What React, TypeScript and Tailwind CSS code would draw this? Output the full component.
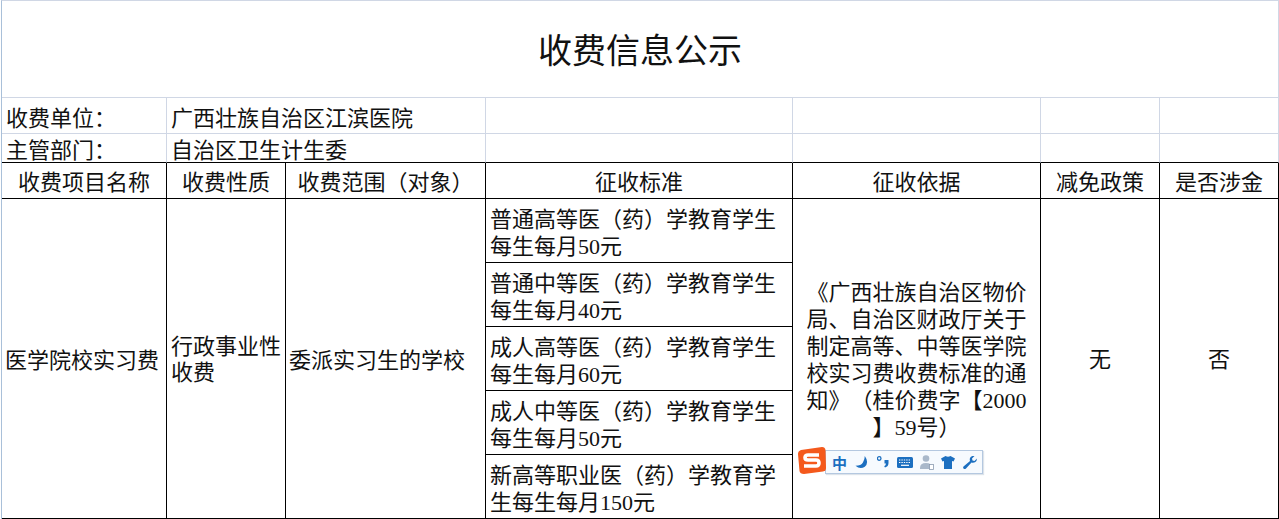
// App.tsx
const FONT = 'font-["Liberation_Serif","Noto_Sans_CJK_SC",serif]';

const HEADERS = ['收费项目名称', '收费性质', '收费范围（对象）', '征收标准', '征收依据', '减免政策', '是否涉金'];

const STANDARDS = [
  ['普通高等医（药）学教育学生', '每生每月50元'],
  ['普通中等医（药）学教育学生', '每生每月40元'],
  ['成人高等医（药）学教育学生', '每生每月60元'],
  ['成人中等医（药）学教育学生', '每生每月50元'],
  ['新高等职业医（药）学教育学', '生每生每月150元'],
];

const BASIS = ['《广西壮族自治区物价', '局、自治区财政厅关于', '制定高等、中等医学院', '校实习费收费标准的通', '知》（桂价费字【2000', '】59号）'];

function ImeBar() {
  return (
    <div className="absolute left-[798px] top-[447px] flex items-start">
      {/* logo */}
      <svg width="28" height="27" viewBox="0 0 28 27" className="relative z-10 shrink-0">
        <path d="M3 3 L24 0 Q27 0 27.500 3 L28 21 Q28 24 25 24.500 L6 27 Q2 27 1.500 24 L0 7 Q0 4 3 3 Z" fill="#f4591c" />
        <path d="M21 8 H10 Q7 8 7 10.500 Q7 13 10 13 H18 Q21 13 21 16 Q21 19 18 19 H6" fill="none" stroke="#fff" strokeWidth="3.600" />
      </svg>
      <div className="mt-[3px] -ml-[1px] flex h-[24px] w-[158px] items-center border border-[#b4c8e0] bg-[#f6fafe] shadow-[1px_1px_1px_#dde3ea]">
        <span className='ml-[6px] w-[15px] font-["Noto_Sans_CJK_SC",sans-serif] text-[15px] leading-none font-bold text-[#1c6fc0]'>中</span>
        <svg width="14" height="13" viewBox="0 0 14 14" className="ml-[8px]">
          <path d="M10 0 Q15 7 10 11.500 Q5 15 0 10.500 Q6 10.500 8 7 Q10 4 10 0 Z" fill="#1c6fc0" />
        </svg>
        <svg width="12" height="12" viewBox="0 0 12 12" className="ml-[8px]">
          <circle cx="2.200" cy="2.500" r="1.800" fill="none" stroke="#1c6fc0" strokeWidth="1.300" />
          <path d="M7.500 4 H11.500 V7 Q11.500 10.500 8 11.500 L7.200 10.300 Q8.800 9.500 9 7.500 H7.500 Z" fill="#1c6fc0" />
        </svg>
        <svg width="16" height="11" viewBox="0 0 16 11" className="ml-[8px]">
          <rect width="16" height="11" rx="1.500" fill="#1c6fc0" />
          <path d="M2 3 H14 M2 5.500 H14" stroke="#fff" strokeWidth="1.200" strokeDasharray="1.400 1" />
          <path d="M4 8.300 H12" stroke="#fff" strokeWidth="1.200" />
        </svg>
        <svg width="14" height="15" viewBox="0 0 14 15" className="ml-[7px]">
          <circle cx="6" cy="3.500" r="3.300" fill="#a9b8ca" />
          <path d="M0 13 Q0 8 6 8 Q12 8 12 13 V14 H0 Z" fill="#a9b8ca" />
          <rect x="9.500" y="9.500" width="4" height="5" fill="#fff" stroke="#8a9bb0" strokeWidth="0.800" />
        </svg>
        <svg width="14" height="13" viewBox="0 0 14 13" className="ml-[7px]">
          <path d="M4.500 0 Q7 1.500 9.500 0 L14 2.500 L12.500 5.500 L11 5 V13 H3 V5 L1.500 5.500 L0 2.500 Z" fill="#1c6fc0" />
        </svg>
        <svg width="14" height="13" viewBox="0 0 14 13" className="ml-[8px]">
          <path d="M14 2.500 L11.500 5 L9.500 4.500 L9 2.500 L11.500 0 Q8 -0.500 7 2 Q6.500 3.500 7 5 L0.500 10.500 Q-0.500 12 1 13 Q2 13.500 3 12.500 L8.500 6.500 Q10.500 7 12 6.200 Q14 5 14 2.500 Z" fill="#1c6fc0" />
        </svg>
      </div>
    </div>
  );
}

export default function App() {
  const blackCell = 'border-r border-b border-black';
  const lightCell = 'border-r border-b border-[#d0d7e5]';

  return (
    <div className={`relative h-[519px] w-[1279px] overflow-hidden bg-white pl-[1px] text-[22px] leading-[27px] text-[#111] [text-spacing-trim:space-all] ${FONT}`}>
      <div className="grid grid-cols-[165px_119px_200px_307px_248px_119px_119px] grid-rows-[97px_36px_29px_36px_repeat(5,64px)] border-t border-l border-t-[#d0d7e5] border-l-[#a9c0d9]">
        {/* 标题 */}
        <div className={`col-span-7 flex items-center justify-center pt-[4px] text-[34px] ${lightCell}`}>收费信息公示</div>

        {/* 单位信息 */}
        <div className={`flex items-center pt-[6px] pl-[4px] ${lightCell}`}>收费单位：</div>
        <div className={`col-span-2 flex items-center pt-[6px] pl-[4px] ${lightCell}`}>广西壮族自治区江滨医院</div>
        <div className={lightCell} />
        <div className={lightCell} />
        <div className={lightCell} />
        <div className={lightCell} />

        <div className={`flex items-center border-b-black pt-[4px] pl-[4px] ${lightCell}`}>主管部门：</div>
        <div className={`col-span-2 flex items-center border-b-black pt-[4px] pl-[4px] ${lightCell}`}>自治区卫生计生委</div>
        <div className={`border-b-black ${lightCell}`} />
        <div className={`border-b-black ${lightCell}`} />
        <div className={`border-b-black ${lightCell}`} />
        <div className={`border-b-black ${lightCell}`} />

        {/* 表头 */}
        {HEADERS.map((h) => (
          <div key={h} className={`flex items-center justify-center pt-[4px] ${blackCell}`}>{h}</div>
        ))}

        {/* 内容 */}
        <div className={`row-span-5 flex items-center pt-[4px] pl-[3px] ${blackCell}`}>医学院校实习费</div>
        <div className={`row-span-5 flex items-center pt-[2px] pl-[4px] leading-[26px] ${blackCell}`}>行政事业性<br />收费</div>
        <div className={`row-span-5 flex items-center pt-[4px] pl-[3px] ${blackCell}`}>委派实习生的学校</div>
        <div className={`col-start-4 row-start-5 flex items-center pt-[4px] pl-[4px] ${blackCell}`}><div>{STANDARDS[0][0]}<br />{STANDARDS[0][1]}</div></div>
        <div className={`col-start-5 row-span-5 row-start-5 flex items-center justify-center pt-[3px] text-center ${blackCell}`}>
          <div>
            {BASIS.map((line) => (
              <div key={line}>{line}</div>
            ))}
          </div>
        </div>
        <div className={`col-start-6 row-span-5 row-start-5 flex items-center justify-center pt-[2px] ${blackCell}`}>无</div>
        <div className={`col-start-7 row-span-5 row-start-5 flex items-center justify-center pt-[2px] ${blackCell}`}>否</div>
        {STANDARDS.slice(1).map((s, i) => (
          <div key={s[0]} className={`col-start-4 flex items-center pt-[4px] pl-[4px] ${blackCell}`} style={{ gridRowStart: i + 6 }}>
            <div>{s[0]}<br />{s[1]}</div>
          </div>
        ))}
      </div>
      <ImeBar />
    </div>
  );
}
